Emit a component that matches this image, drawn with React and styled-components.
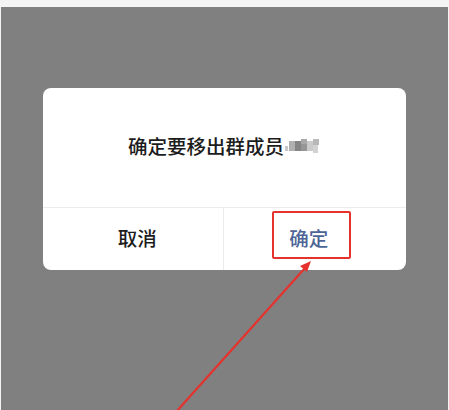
import styled, { createGlobalStyle } from 'styled-components';

const GlobalStyle = createGlobalStyle`
  html, body {
    margin: 0;
    padding: 0;
    background: #f4f4f4;
    font-family: "Noto Sans CJK SC", "Noto Sans", sans-serif;
  }
`;

const Page = styled.div`
  width: 449px;
  height: 410px;
  position: relative;
  overflow: hidden;
  padding: 7px 1px 0 1px;
  box-sizing: border-box;
`;

const Backdrop = styled.div`
  height: 403px;
  background: #808080;
  padding: 81px 0 0 42px;
  box-sizing: border-box;
`;

const Dialog = styled.div`
  width: 363px;
  height: 182px;
  background: #fff;
  border-radius: 8px;
  position: relative;
  display: flex;
  flex-direction: column;
`;

const Message = styled.div`
  height: 119px;
  display: flex;
  align-items: center;
  justify-content: center;
  gap: 1px;
  font-size: 19.5px;
  font-weight: 500;
  color: #1c1c1c;
  padding-bottom: 4px;
  box-sizing: border-box;
`;

const Actions = styled.div`
  flex: 1;
  display: flex;
  border-top: 1px solid #ececec;
`;

const ActionBtn = styled.div`
  flex: 1;
  display: flex;
  align-items: center;
  justify-content: center;
  font-size: 19.5px;
  font-weight: 500;
  padding-bottom: 3px;
  color: ${(p) => (p.primary ? '#4d6496' : '#1c1c1c')};
  padding-left: ${(p) => (p.primary ? '0' : '9px')};
  padding-right: ${(p) => (p.primary ? '12px' : '0')};
  & + & {
    border-left: 1px solid #ececec;
  }
`;

const Highlight = styled.div`
  position: absolute;
  left: 229px;
  top: 123px;
  width: 79px;
  height: 48px;
  border: 2px solid #e5322d;
  border-radius: 2px;
  box-sizing: border-box;
`;

const Overlay = styled.svg`
  position: absolute;
  left: 0;
  top: 0;
  pointer-events: none;
`;

const Mosaic = () => (
  <svg width="36" height="18" viewBox="0 0 36 18">
    <rect x="0" y="9" width="3" height="5" fill="#c8c8c8" />
    <rect x="4" y="4" width="6" height="10" fill="#b0b0b0" />
    <rect x="10" y="4" width="6" height="10" fill="#858585" />
    <rect x="16" y="2" width="6" height="5" fill="#a8a8a8" />
    <rect x="16" y="7" width="6" height="7" fill="#969696" />
    <rect x="22" y="4" width="6" height="10" fill="#cacaca" />
    <rect x="28" y="2" width="6" height="6" fill="#b8b8b8" />
    <rect x="28" y="8" width="5" height="8" fill="#d2d2d2" />
  </svg>
);

export default function App() {
  return (
    <>
      <GlobalStyle />
      <Page>
        <Backdrop>
          <Dialog>
            <Message>
              <span>确定要移出群成员</span>
              <Mosaic />
            </Message>
            <Actions>
              <ActionBtn>取消</ActionBtn>
              <ActionBtn primary>确定</ActionBtn>
            </Actions>
            <Highlight />
          </Dialog>
        </Backdrop>
        <Overlay width="449" height="410" viewBox="0 0 449 410">
          <line x1="176" y1="412" x2="305" y2="268" stroke="#e5322d" strokeWidth="2.2" />
          <polygon points="311,261 300,266 307,272" fill="#e5322d" />
        </Overlay>
      </Page>
    </>
  );
}
